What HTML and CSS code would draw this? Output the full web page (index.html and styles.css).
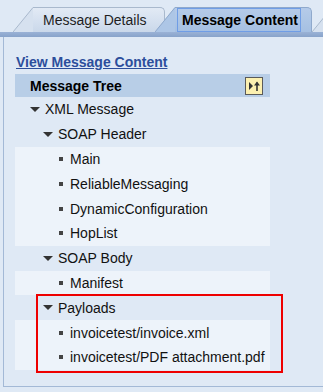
FILE: index.html
```html
<!DOCTYPE html>
<html>
<head>
<meta charset="utf-8">
<link rel="stylesheet" href="styles.css">
</head>
<body>
<div class="tabs">
  <div class="tab tab-details">
    <svg class="slant" width="20" height="25" viewBox="0 0 20 25"><polygon points="20,0 20,25 0,25" fill="#d6e1ef"/><line x1="0" y1="25" x2="20" y2="0.5" stroke="#a9b9cd" stroke-width="1"/></svg>
    <span class="tab-label">Message Details</span>
  </div>
  <div class="tab tab-content">
    <svg class="slant" width="20" height="25" viewBox="0 0 20 25"><polygon points="20,0 20,25 0,25" fill="#adc6e6"/><line x1="0" y1="25" x2="20" y2="0.5" stroke="#8fa9cc" stroke-width="1"/></svg>
    <span class="tab-label focus">Message Content</span>
  </div>
  <div class="tab tab-more">
    <svg class="slant" width="20" height="25" viewBox="0 0 20 25"><polygon points="20,0 20,25 0,25" fill="#d6e1ef"/><line x1="0" y1="25" x2="20" y2="0.5" stroke="#a9b9cd" stroke-width="1"/></svg>
    <span class="tab-label">&nbsp;</span>
  </div>
</div>
<div class="bar"></div>
<div class="panel">
  <a class="view-link" href="#">View Message Content</a>
  <div class="tree">
    <div class="tree-head">
      <span>Message Tree</span>
      <span class="head-btn"><svg width="16" height="16" viewBox="0 0 16 16"><polygon points="3,4 7,8 3,12" fill="#333"/><line x1="11" y1="4.5" x2="11" y2="13" stroke="#333" stroke-width="1.6"/><polygon points="8,7.5 11,3.5 14,7.5" fill="#333"/></svg></span>
    </div>
    <div class="row node l1"><span class="tri"></span>XML Message</div>
    <div class="row node l2"><span class="tri"></span>SOAP Header</div>
    <div class="row leaf"><span class="dot"></span>Main</div>
    <div class="row leaf"><span class="dot"></span>ReliableMessaging</div>
    <div class="row leaf"><span class="dot"></span>DynamicConfiguration</div>
    <div class="row leaf"><span class="dot"></span>HopList</div>
    <div class="row node l2"><span class="tri"></span>SOAP Body</div>
    <div class="row leaf"><span class="dot"></span>Manifest</div>
    <div class="row node l2"><span class="tri"></span>Payloads</div>
    <div class="row leaf"><span class="dot"></span>invoicetest/invoice.xml</div>
    <div class="row leaf"><span class="dot"></span>invoicetest/PDF attachment.pdf</div>
    <div class="highlight"></div>
  </div>
</div>
</body>
</html>
```
FILE: styles.css
```css
html, body {
  margin: 0;
  padding: 0;
  background: #dfe9f5;
  font-family: "Liberation Sans", Arial, sans-serif;
  font-size: 14px;
  overflow: hidden;
}

.tabs {
  display: flex;
  align-items: flex-end;
  height: 32px;
  padding-left: 33px;
  white-space: nowrap;
  overflow: hidden;
}

.tab {
  position: relative;
  flex-shrink: 0;
  height: 24px;
  border-top: 1px solid #a9b9cd;
  border-right: 1px solid #a9b9cd;
  border-top-right-radius: 5px;
  display: flex;
  align-items: center;
}

.tab .slant {
  position: absolute;
  left: -20px;
  top: -1px;
  display: block;
}

.tab-details {
  background: linear-gradient(#e2eaf5, #cad8ea);
  padding-left: 10px;
  width: 121px;
  color: #1e1e1e;
  z-index: 1;
}

.tab-content {
  background: linear-gradient(#b5cbe9, #a5c0e2);
  border-color: #8fa9cc;
  margin-left: 10px;
  padding-left: 2px;
  width: 134px;
  font-weight: bold;
  color: #000;
  z-index: 2;
}

.tab-more {
  background: linear-gradient(#e2eaf5, #cad8ea);
  margin-left: 20px;
  width: 40px;
  z-index: 1;
}

.tab-label.focus {
  border: 1px solid #6f9de6;
  padding: 3px 2px 3px 4px;
  line-height: 16px;
}

.bar {
  height: 5px;
  background: linear-gradient(#9ab2d6, #88a3ca);
}

.panel {
  margin-left: 3px;
  border-left: 1px solid #a3b9d6;
  border-bottom: 1px solid #a3b9d6;
  padding: 17px 0 16px 11px;
}

.view-link {
  display: block;
  font-weight: bold;
  color: #2c4e9c;
  text-decoration: underline;
  line-height: 16px;
  padding-left: 1px;
  margin-bottom: 4px;
}

.tree {
  position: relative;
  width: 255px;
}

.tree-head {
  height: 23px;
  background: #b8cee7;
  font-weight: bold;
  color: #000;
  display: flex;
  align-items: center;
  justify-content: space-between;
  padding: 0 7px 0 15px;
}

.head-btn {
  width: 16px;
  height: 16px;
  border: 1px solid #5a5a5a;
  background: #fcf0b0;
  display: flex;
}

.row {
  height: 24.8px;
  display: flex;
  align-items: center;
  color: #111;
}

.node {
  background: #dfe9f5;
}

.leaf {
  background: #edf3fa;
  padding-left: 44px;
}

.l1 { padding-left: 15px; }
.l2 { padding-left: 28px; }

.tri {
  width: 0;
  height: 0;
  border-left: 5px solid transparent;
  border-right: 5px solid transparent;
  border-top: 5px solid #333;
  margin-right: 5px;
}

.dot {
  width: 4px;
  height: 4px;
  background: #444;
  margin-right: 7px;
}

.highlight {
  position: absolute;
  left: 21px;
  top: 220px;
  width: 243px;
  height: 75px;
  border: 2px solid #ee0000;
  pointer-events: none;
}
```
